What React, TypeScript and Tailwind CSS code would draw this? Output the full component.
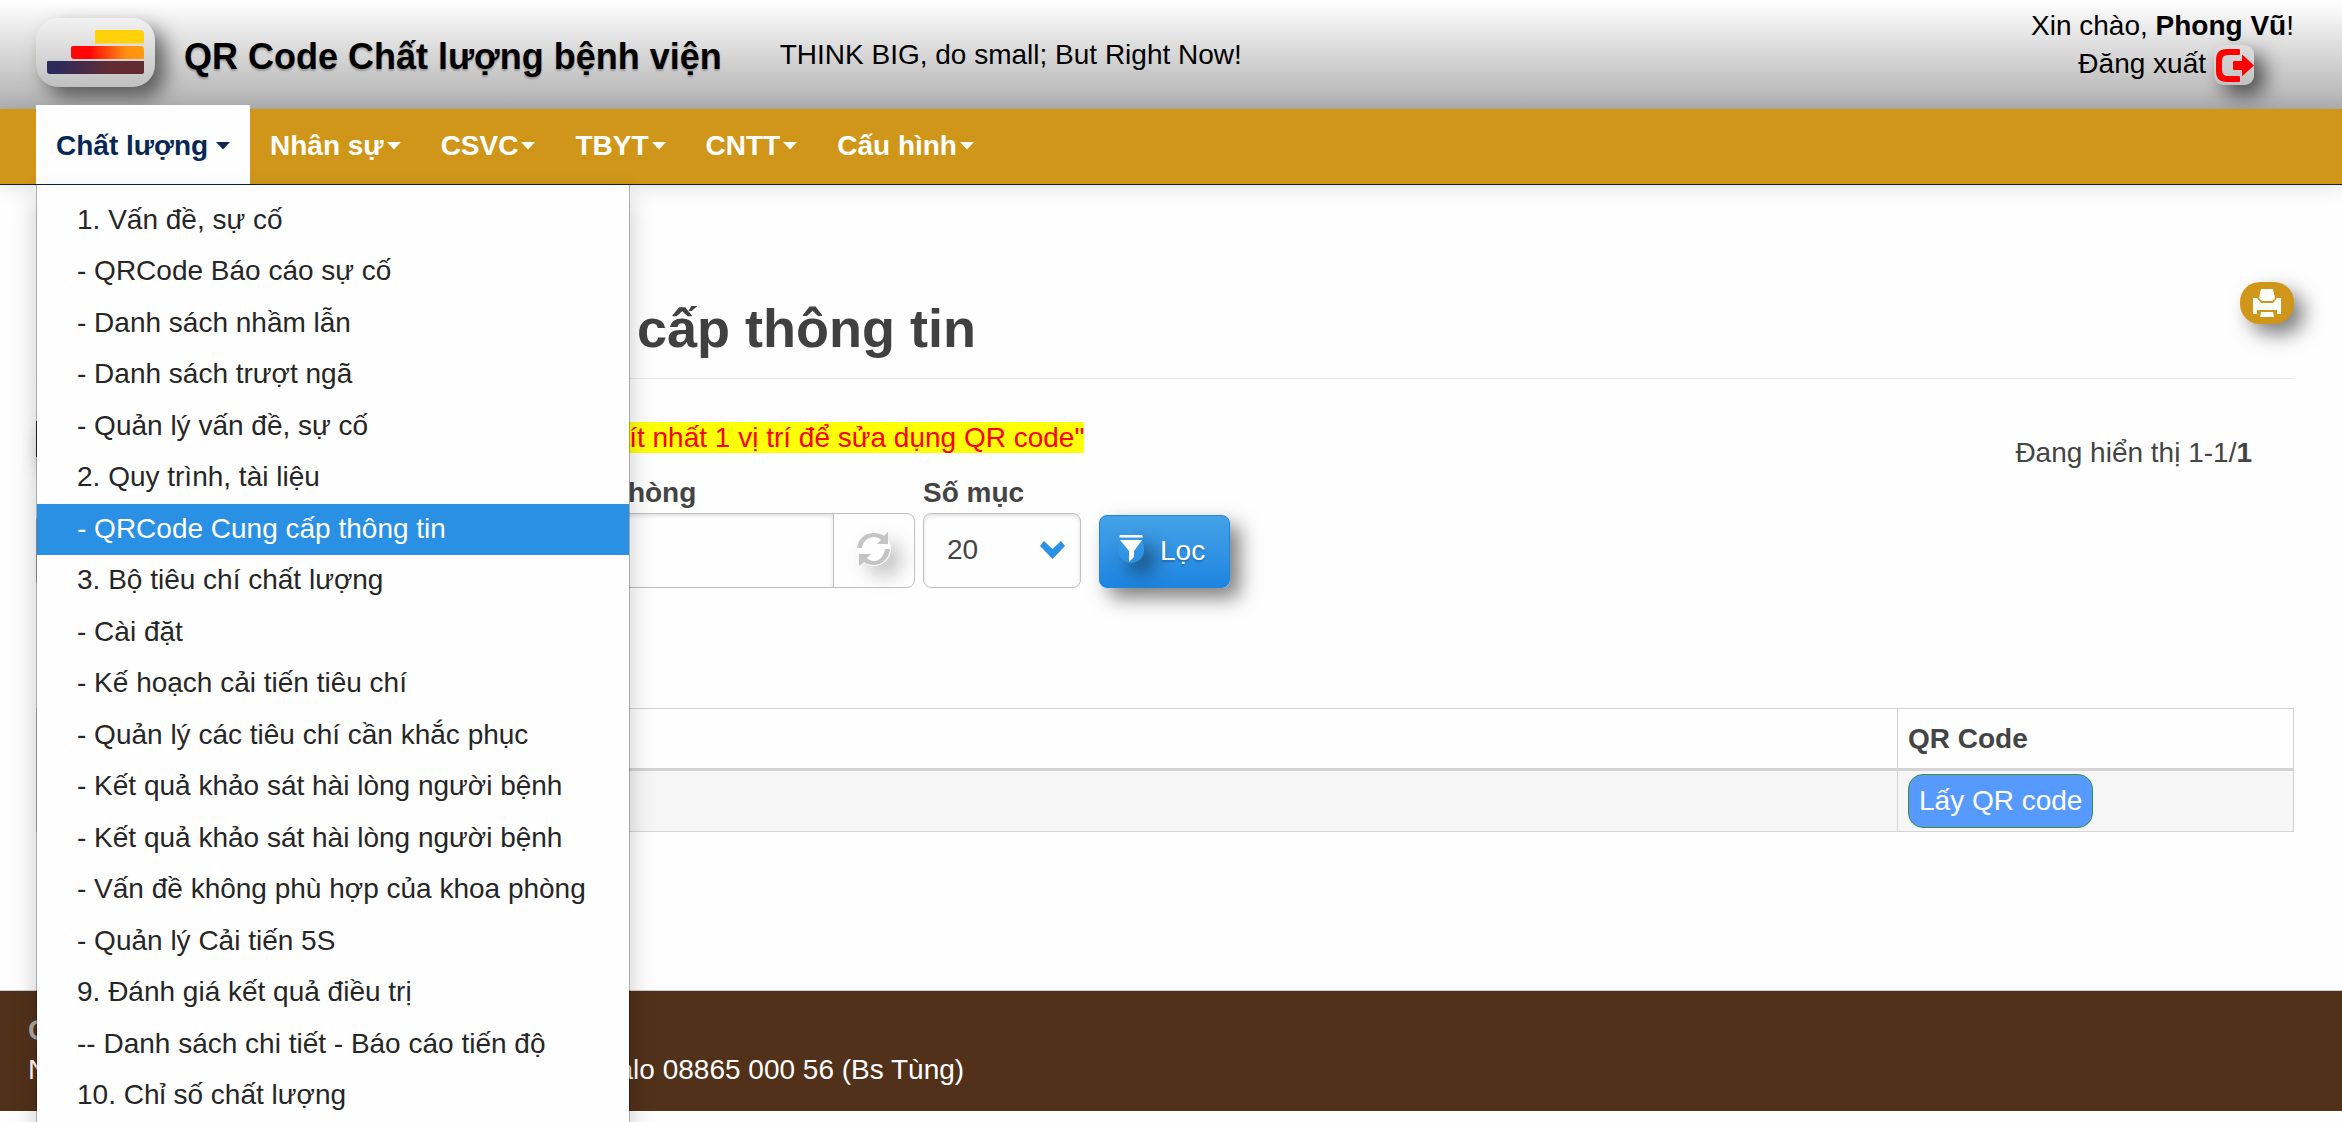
import React, { useState } from 'react';

interface MenuEntry {
  label: string;
  active?: boolean;
}

const qualityMenu: MenuEntry[] = [
  { label: '1. Vấn đề, sự cố' },
  { label: '- QRCode Báo cáo sự cố' },
  { label: '- Danh sách nhầm lẫn' },
  { label: '- Danh sách trượt ngã' },
  { label: '- Quản lý vấn đề, sự cố' },
  { label: '2. Quy trình, tài liệu' },
  { label: '- QRCode Cung cấp thông tin', active: true },
  { label: '3. Bộ tiêu chí chất lượng' },
  { label: '- Cài đặt' },
  { label: '- Kế hoạch cải tiến tiêu chí' },
  { label: '- Quản lý các tiêu chí cần khắc phục' },
  { label: '- Kết quả khảo sát hài lòng người bệnh' },
  { label: '- Kết quả khảo sát hài lòng người bệnh' },
  { label: '- Vấn đề không phù hợp của khoa phòng' },
  { label: '- Quản lý Cải tiến 5S' },
  { label: '9. Đánh giá kết quả điều trị' },
  { label: '-- Danh sách chi tiết - Báo cáo tiến độ' },
  { label: '10. Chỉ số chất lượng' },
];

const navItems = ['Nhân sự', 'CSVC', 'TBYT', 'CNTT', 'Cấu hình'];

const Caret = () => (
  <svg className="w-3.5 h-2" viewBox="0 0 14 8" fill="currentColor" aria-hidden="true">
    <path d="M0 0h14L7 7.5z" />
  </svg>
);

const Logo = () => (
  <a
    href="#"
    aria-label="Trang chủ"
    className="block w-[119px] h-[69px] rounded-[22px] shadow-[10px_10px_20px_rgba(0,0,0,0.55)]"
  >
    <svg className="w-full h-full" viewBox="0 0 119 69">
      <defs>
        <linearGradient id="logo-mid">
          <stop offset="0.25" stopColor="#ff0505" />
          <stop offset="0.75" stopColor="#ff8f10" />
          <stop offset="1" stopColor="#ff9a0e" />
        </linearGradient>
        <linearGradient id="logo-low">
          <stop offset="0.1" stopColor="#2d2a5c" />
          <stop offset="0.65" stopColor="#632c33" />
        </linearGradient>
      </defs>
      <path d="M59 13q0-1 1-1h44q4 0 4 4v9.500h-49z" fill="#ffd10a" />
      <path d="M37 28h67q4 0 4 4v9H38q-3 0-3-3v-8q0-2 2-2z" fill="url(#logo-mid)" />
      <path d="M12 43h96v11q0 2-2 2H14q-3 0-3-3v-9q0-1 1-1z" fill="url(#logo-low)" />
    </svg>
  </a>
);

const Header = () => (
  <header className="flex justify-between h-[109px] pl-9 pr-12 bg-linear-to-b from-white to-[#b0b0b0] text-black">
    <div className="flex pt-[18px]">
      <Logo />
      <h2 className="ml-[29px] mt-[17px] text-[36px] leading-[44px] font-bold [text-shadow:0_2px_2px_rgba(0,0,0,0.25)]">
        QR Code Chất lượng bệnh viện
      </h2>
      <p className="ml-[58px] mt-[21px] text-[28px] leading-8">THINK BIG, do small; But Right Now!</p>
    </div>
    <div className="pt-[7px] leading-[38px] text-right">
      <p>
        Xin chào, <b>Phong Vũ</b>!
      </p>
      <a href="#" className="flex justify-end gap-2 pr-10">
        Đăng xuất
        <span className="block w-10 h-10 rounded-[9px] shadow-[10px_10px_20px_rgba(0,0,0,0.6)]">
          <svg className="w-10 h-10" viewBox="0 0 40 40" fill="#ff0000" aria-hidden="true">
            <path d="M25 4H13Q2 4 2 15v11q0 11 11 11h12q1 0 1-1v-4q0-1-1-1H14q-6 0-6-6v-9q0-6 6-6h11q1 0 1-1V5q0-1-1-1z" />
            <path d="M20 16h8v-5.500q0-1 1-.300L40 20.500 29 30.600q-1 .700-1-.300V25h-8q-1 0-1-1v-7q0-1 1-1z" />
          </svg>
        </span>
      </a>
    </div>
  </header>
);

const NavBar = () => {
  const [open, setOpen] = useState(true);

  return (
    <nav className="relative z-10 flex h-[76px] pl-9 bg-[#cf961a] border-b border-[#0a2233] shadow-[0_2px_20px_rgba(0,0,0,0.12)] text-white font-bold [text-shadow:0_2px_2px_rgba(0,0,0,0.25)]">
      <div className="relative">
        <button
          onClick={() => setOpen(!open)}
          aria-expanded={open}
          className="flex items-center gap-2 w-[214px] h-[79px] -mt-1 pl-5 pt-0.5 bg-[#fefefe] text-[#072857] whitespace-nowrap"
        >
          Chất lượng
          <Caret />
        </button>
        {open && (
          <ul className="absolute top-[76px] left-0 w-[594px] py-2.5 bg-[#fefefe] bg-clip-padding border-x border-black/25 shadow-[0_12px_24px_rgba(0,0,0,0.2)] text-[#262626] font-normal [text-shadow:none]">
            {qualityMenu.map((entry, i) => (
              <li key={i} className="h-[51px] even:h-[52px]">
                <a
                  href="#"
                  className={`block h-full px-10 leading-[50px] whitespace-nowrap ${
                    entry.active ? 'bg-[#2a90e3] text-white' : 'hover:bg-gray-100'
                  }`}
                >
                  {entry.label}
                </a>
              </li>
            ))}
          </ul>
        )}
      </div>
      {navItems.map((item) => (
        <button key={item} className="flex items-center gap-[3px] px-5 pb-0.5">
          {item}
          <Caret />
        </button>
      ))}
    </nav>
  );
};

const Filters = () => (
  <form className="flex items-start" onSubmit={(e) => e.preventDefault()}>
    <div className="w-[879px]">
      <label htmlFor="keyword" className="block pl-[497px] font-bold leading-10 whitespace-nowrap">
        Khoa phòng
      </label>
      <div className="flex h-[75px] border border-[#bfbfbf] rounded-lg">
        <input id="keyword" type="text" className="flex-1 min-w-0 px-6 rounded-l-lg outline-none shadow-[inset_0_2px_4px_rgba(0,0,0,0.12)]" />
        <button type="button" aria-label="Làm mới" className="flex items-center justify-center w-[81px] border-l border-[#bfbfbf]">
          <span className="block -mt-1 rounded-full shadow-[10px_10px_20px_rgba(0,0,0,0.25)]">
            <svg className="w-[34px] h-[34px]" viewBox="0 0 34 34" fill="#c4c4c4" aria-hidden="true">
              <path d="M0 16C1 7 8 1 17 1c4 0 8 1 10 3l4-4v12H20l4-4c-2-2-4-3-7-3-6 0-11 4-12 11z" />
              <path d="M33 17c-1 10-8 16-16 16-4 0-8-1-10-3l-5 4V22h12l-4 4c2 2 4 3 7 3 6 0 10-5 11-12z" />
            </svg>
          </span>
        </button>
      </div>
    </div>
    <div className="w-[158px] ml-2">
      <label htmlFor="page-size" className="block font-bold leading-10">
        Số mục
      </label>
      <div className="relative">
        <select
          id="page-size"
          defaultValue="20"
          className="appearance-none w-full h-[75px] pl-[23px] pb-0.5 border border-[#bfbfbf] rounded-lg bg-transparent shadow-[inset_0_2px_4px_rgba(0,0,0,0.12)]"
        >
          <option>10</option>
          <option>20</option>
          <option>50</option>
        </select>
        <svg className="absolute right-4 top-7 w-[25px] h-[18px] pointer-events-none" viewBox="0 0 25 18" fill="#2a90e3" aria-hidden="true">
          <path d="M4 0 12.500 8 21 0l4 5-12.500 13L0 5z" />
        </svg>
      </div>
    </div>
    <button
      type="submit"
      className="flex items-center gap-4 w-[131px] h-[73px] mt-[42px] ml-[18px] pl-[18px] pb-0.5 rounded-lg border border-[#1f86d8] bg-linear-to-b from-[#45a2e8] to-[#1b85e0] text-white shadow-[10px_10px_20px_rgba(0,0,0,0.5)] [text-shadow:0_2px_2px_rgba(0,0,0,0.25)]"
    >
      <span className="block -mt-1 rounded-full shadow-[10px_10px_20px_rgba(0,0,0,0.5)]">
        <svg className="w-[26px] h-[28px]" viewBox="0 0 26 28" fill="#fff" aria-hidden="true">
          <path d="M2 0h22l1 2.500H1zM2 5h22l-8 11v6l-5 5V16z" />
        </svg>
      </span>
      Lọc
    </button>
  </form>
);

const App: React.FC = () => (
  <div className="h-screen overflow-hidden bg-[#fefefe] font-['Liberation_Sans',Arial,sans-serif] text-[28px] text-[#444]">
    <Header />
    <NavBar />

    <main className="px-9 pr-12">
      <div className="flex justify-between h-[194px] pt-[97px] border-b border-[#e8e8e8]">
        <h1 className="pl-1 text-[54px] leading-[92px] font-bold whitespace-nowrap text-[#404040]">Quản lý QRCode Cung cấp thông tin</h1>
        <button
          aria-label="In"
          className="flex items-center justify-center w-[54px] h-[42px] rounded-[20px] bg-[#cf961a] shadow-[10px_10px_20px_rgba(0,0,0,0.5)]"
        >
          <svg className="w-7 h-7" viewBox="0 0 28 28" fill="#fff" aria-hidden="true">
            <path d="M8 0h12l2 9-3 3H9L6 9zM0 9h4l4 5h12l4-5h4v16h-4v-4H4v4H0zM8 23h12l1 5H7z" />
          </svg>
        </button>
      </div>

      <div className="flex justify-between pt-[42px]">
        <div className="flex items-start gap-2.5 h-[52px] leading-8">
          <button className="px-2 h-9 bg-[#333] text-white shadow-[10px_10px_20px_rgba(0,0,0,0.5)]">Thêm</button>
          <p className="mt-px whitespace-nowrap">
            <mark className="bg-[#ffff0a] text-[#ff0000]">
              "Cần phải thiết lập và lựa chọn vị trí, có ít nhất 1 vị trí để sửa dụng QR code"
            </mark>
          </p>
        </div>
        <p className="pt-4 pr-[42px] leading-8">
          Đang hiển thị 1-1/<b>1</b>
        </p>
      </div>

      <Filters />

      <table className="w-full mt-[120px] border-collapse table-fixed">
        <thead>
          <tr className="h-[61px] border border-b-[3px] border-[#d4d4d4]">
            <th className="text-left pl-2.5">Tên tài liệu</th>
            <th className="w-[396px] pl-2.5 text-left border-l border-[#d4d4d4]">QR Code</th>
          </tr>
        </thead>
        <tbody>
          <tr className="h-[62px] bg-[#f6f6f6] border border-[#d4d4d4]">
            <td className="pl-2.5">Cung cấp thông tin</td>
            <td className="pl-2.5 border-l border-[#d4d4d4]">
              <button className="block h-[54px] px-2.5 border border-[#3f8f3a] rounded-[15px] bg-[#569aff] text-white">Lấy QR code</button>
            </td>
          </tr>
        </tbody>
      </table>
    </main>

    <footer className="h-[121px] mt-[158px] pl-7 pt-[19px] border-t border-[#ccc] bg-[#52311a] leading-10 text-white">
      <p className="font-bold text-[#aaa]">QR Code Chất lượng bệnh viện</p>
      <p>Nhóm phát triển phần mềm, liên hệ hỗ trợ tại: Zalo 08865 000 56 (Bs Tùng)</p>
    </footer>
  </div>
);

export default App;
